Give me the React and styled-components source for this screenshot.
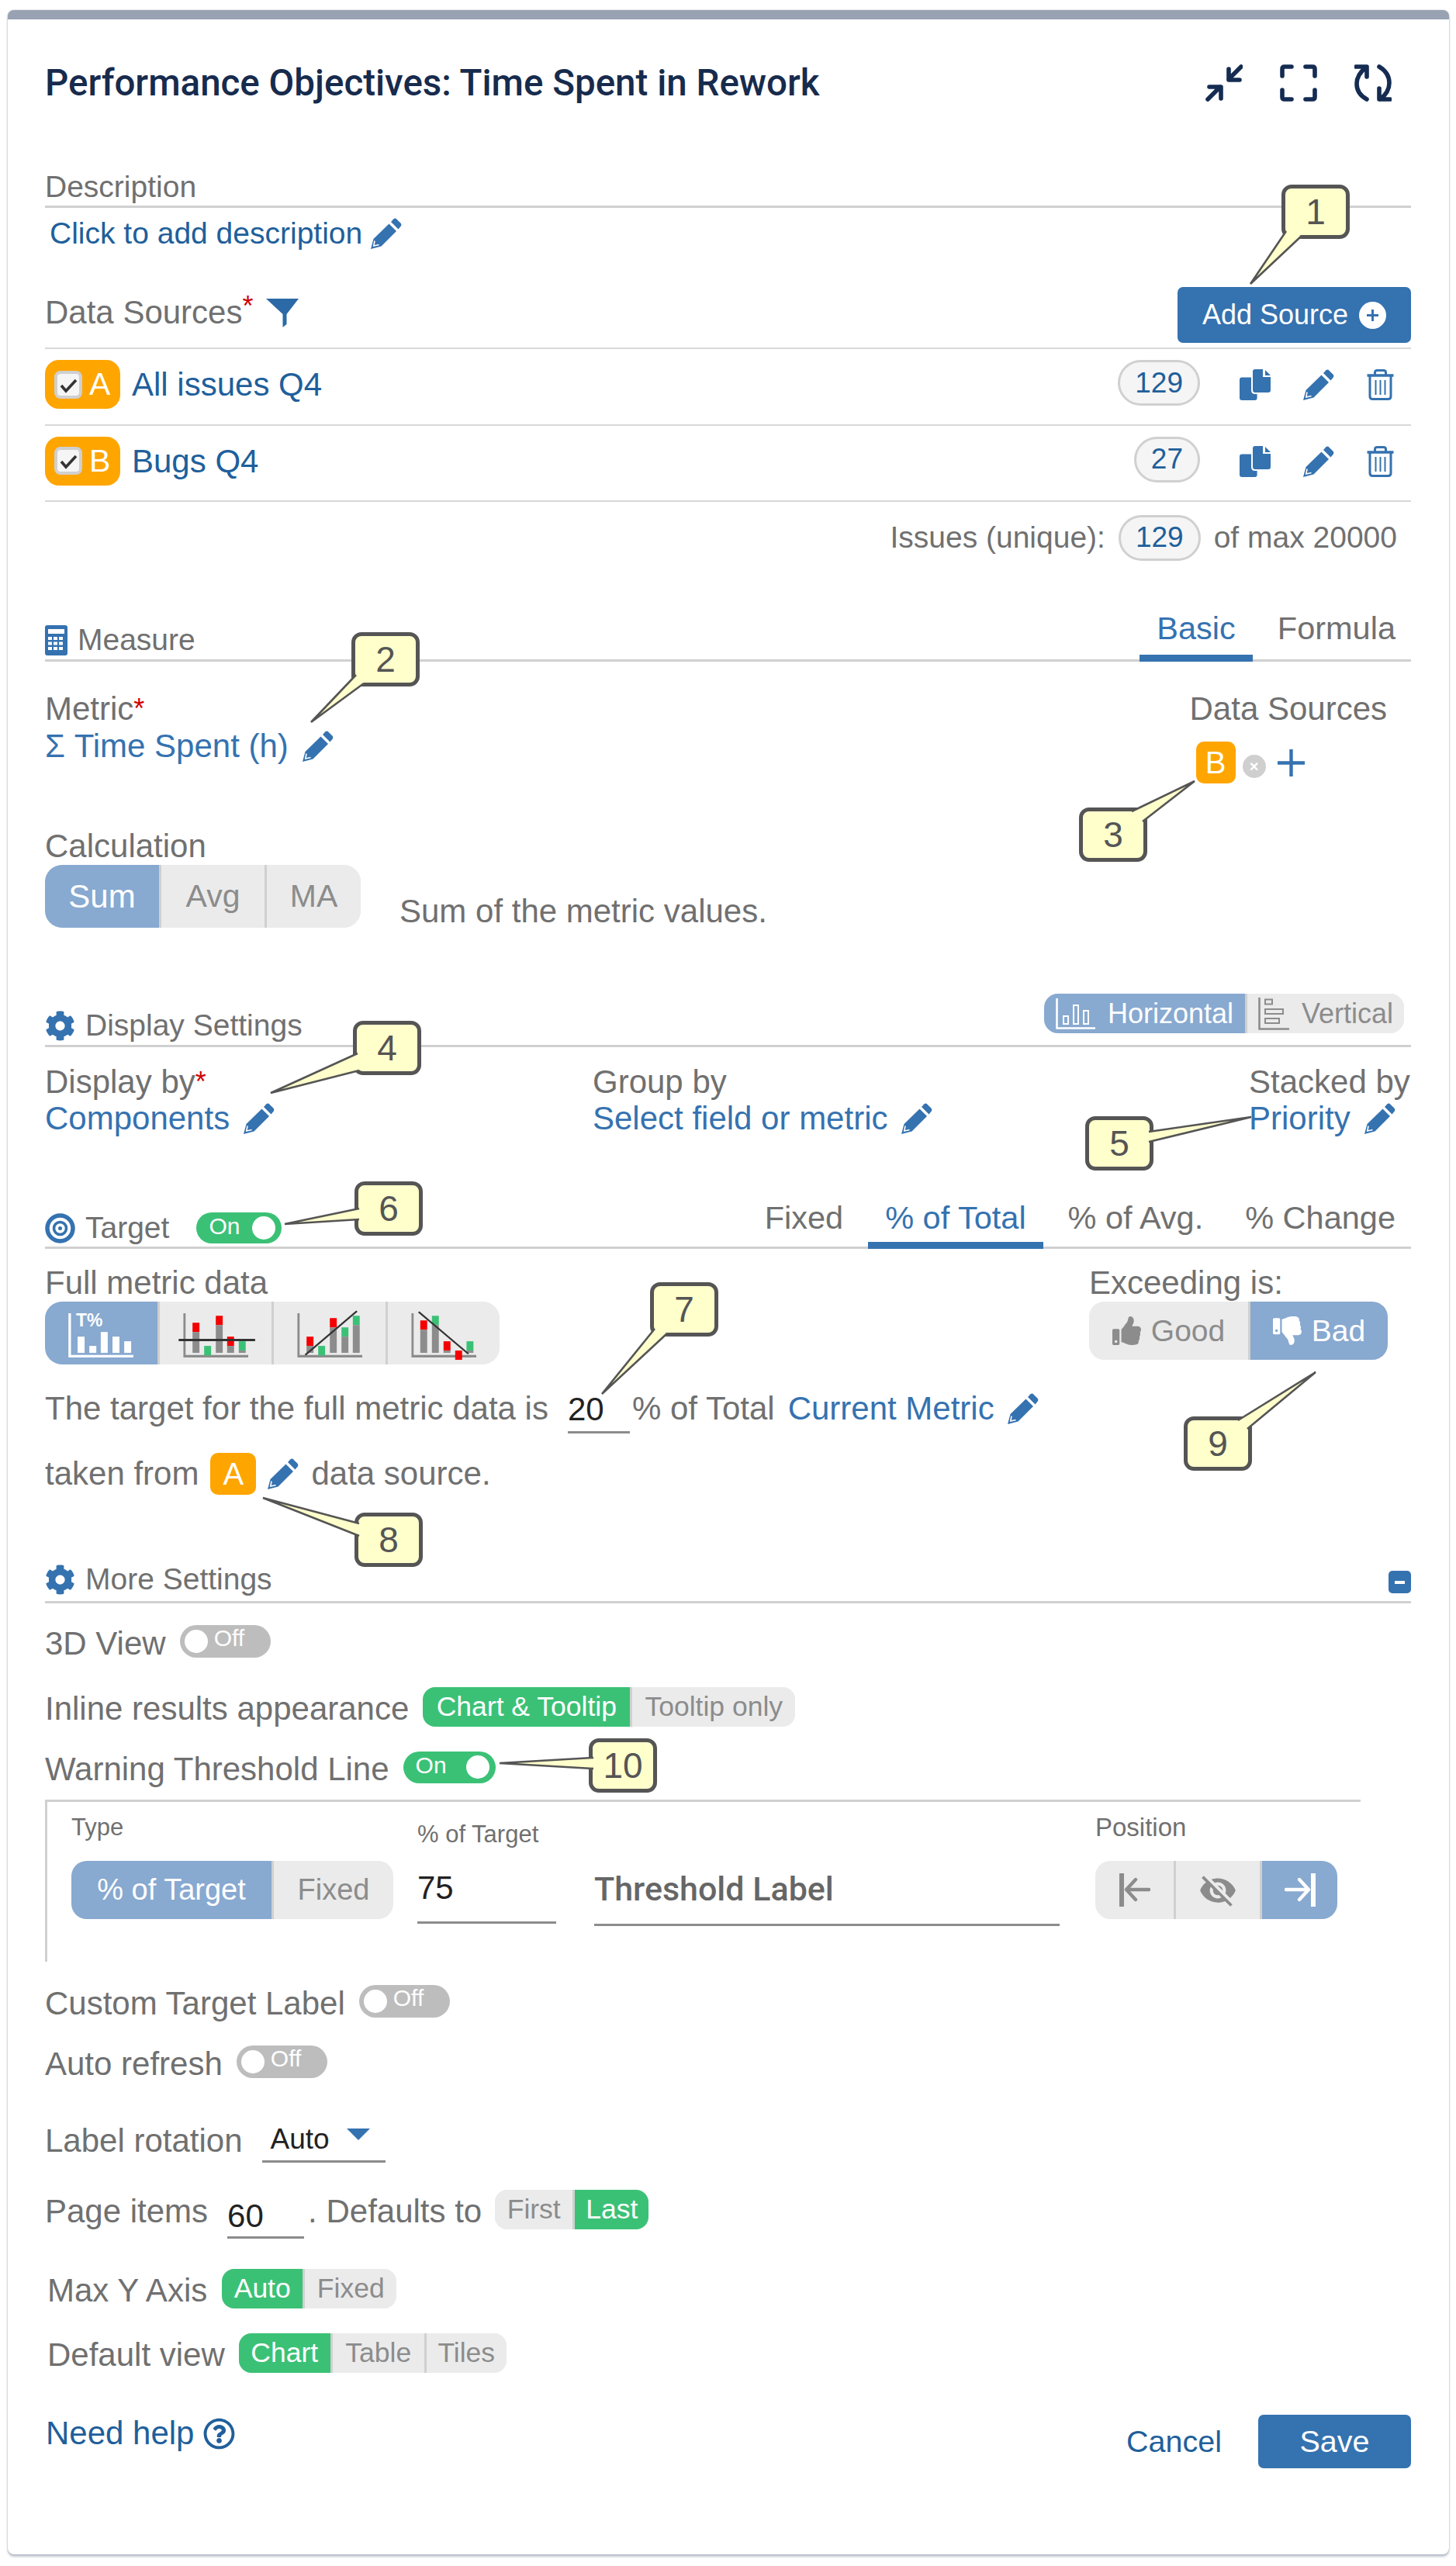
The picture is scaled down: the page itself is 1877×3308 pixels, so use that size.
import React from "react";
import styled, { createGlobalStyle } from "styled-components";
import { FaCog, FaThumbsUp, FaThumbsDown, FaRegQuestionCircle } from "react-icons/fa";
import { MdVisibilityOff } from "react-icons/md";

const BLUE = "#3572b0";
const DARK_LINK = "#205f9b";
const GREY = "#707070";
const SEG_ON = "#88a9d0";
const SEG_OFF = "#ebebeb";
const GREEN = "#3bc176";
const ORANGE = "#ffa500";

const Global = createGlobalStyle`
  html, body { margin: 0; padding: 0; background: #fff; }
  body { font-family: "Liberation Sans", Arial, sans-serif; color: ${GREY}; }
  * { box-sizing: border-box; }
`;

const Page = styled.div`
  position: relative;
  width: 1877px;
  height: 3308px;
  padding: 13px 9px 0 10px;
`;

const Card = styled.div`
  height: 3280px;
  padding: 0 49px 0 48px;
  border-top: 12px solid #98a2b3;
  border-radius: 8px;
  background: #fff;
  box-shadow: 0 0 2px rgba(9, 30, 66, 0.3), 0 3px 3px rgba(9, 30, 66, 0.25);
`;

const Icon = styled.svg`
  flex-shrink: 0;
  display: block;
  width: ${(p) => p.$w}px;
  height: ${(p) => p.$h || p.$w}px;
  color: ${(p) => p.$c || BLUE};
`;

const Pencil = ({ size = 40, c }) => (
  <Icon $w={size} $c={c} viewBox="0 0 40 40">
    <path fill="currentColor" d="M0 40 L3.5 27 L23.5 7.5 L33 17 L13.5 36.5 Z" />
    <path fill="currentColor" d="M26 5 L29.5 1.2 Q31 0 32.5 .8 L38.8 7 Q40 8.8 38.8 10.5 L35.5 14.5 Z" />
    <path fill="none" stroke="#fff" strokeWidth="1.6" d="M5 29.5 L3.8 36 L10.5 34.5" />
  </Icon>
);

const CopyIcon = () => (
  <Icon $w={40} viewBox="0 0 40 40">
    <rect fill="currentColor" x="0" y="10.5" width="22.6" height="29.5" rx="3" />
    <path fill="currentColor" stroke="#fff" strokeWidth="2" d="M20 -1 H31 V9 H41 V27 Q41 31 37 31 H20 Q16 31 16 27 V3 Q16 -1 20 -1 Z" />
    <path fill="currentColor" d="M33 1 L40 8 H33 Z" />
  </Icon>
);

const TrashIcon = () => (
  <Icon $w={35} $h={40} viewBox="0 0 35 40">
    <g fill="none" stroke="currentColor">
      <path strokeWidth="3.4" d="M.5 8 H34.5" />
      <path strokeWidth="3" d="M10.5 7 V4 Q10.5 1.5 13.5 1.5 H21.5 Q24.5 1.5 24.5 4 V7" />
      <path strokeWidth="3" d="M4 9 V35 Q4 38.5 7.5 38.5 H27.5 Q31 38.5 31 35 V9" />
      <path strokeWidth="2" d="M11.5 14 V33 M17.5 14 V33 M23.5 14 V33" />
    </g>
  </Icon>
);

const FunnelIcon = () => (
  <Icon $w={42} $h={37} $c="#2b6aa6" viewBox="0 0 42 37">
    <path fill="currentColor" d="M0 0 H42 L26.5 20 V33 L21.5 37 V20 Z" />
  </Icon>
);

const PlusCircle = () => (
  <Icon $w={35} viewBox="0 0 35 35" $c="#fff">
    <circle cx="17.5" cy="17.5" r="17.5" fill="currentColor" />
    <path d="M17.5 10 V25 M10 17.5 H25" stroke={BLUE} strokeWidth="3" />
  </Icon>
);

const CalculatorIcon = () => (
  <Icon $w={29} $h={39} viewBox="0 0 29 39">
    <rect fill="currentColor" width="29" height="39" rx="3" />
    <rect fill="#fff" x="4" y="5" width="21" height="6" />
    <path stroke="#fff" strokeWidth="4" strokeDasharray="5 2" d="M4 17 H25 M4 23.5 H25 M4 30 H25" />
  </Icon>
);

const TargetIcon = () => (
  <Icon $w={39} viewBox="0 0 39 39">
    <g fill="none" stroke="currentColor">
      <circle cx="19.5" cy="19.5" r="16.5" strokeWidth="5.5" />
      <circle cx="19.5" cy="19.5" r="8" strokeWidth="3.6" />
    </g>
    <circle cx="19.5" cy="19.5" r="2.5" fill="currentColor" />
  </Icon>
);

const CompressIcon = () => (
  <Icon $w={48} $c="#152c52" viewBox="0 0 48 48">
    <path fill="none" stroke="currentColor" strokeWidth="5.6" strokeLinecap="round" strokeLinejoin="round"
      d="M46 3 L30 19 M30 6 V20 H44 M3 45 L19 29 M5 29 H20 V44" />
  </Icon>
);

const ExpandIcon = () => (
  <Icon $w={48} $c="#152c52" viewBox="0 0 48 48">
    <path fill="none" stroke="currentColor" strokeWidth="5.6" strokeLinecap="round"
      d="M3 15 V6 Q3 3 6 3 H15 M33 3 H42 Q45 3 45 6 V15 M3 33 V42 Q3 45 6 45 H15 M33 45 H42 Q45 45 45 42 V33" />
  </Icon>
);

const RefreshIcon = () => (
  <Icon $w={48} $c="#152c52" viewBox="0 0 48 48">
    <path fill="none" stroke="currentColor" strokeWidth="5.6" strokeLinecap="round" strokeLinejoin="round"
      d="M16 45 Q3 38 3 25 Q3 13 15 4 M2 3 H16 V16 M32 3 Q45 11 45 24 Q45 36 33 45 M32 31 V45 H46" />
  </Icon>
);

const HorizontalIcon = () => (
  <Icon $w={51} $h={40} $c="#fff" viewBox="0 0 51 40">
    <g fill="none" stroke="currentColor" strokeWidth="2">
      <path strokeWidth="2.6" d="M1.5 0 V38.5 H51" />
      <rect x="10" y="23" width="6" height="10" />
      <rect x="23" y="9" width="6" height="24" />
      <rect x="36" y="16" width="6" height="17" />
    </g>
  </Icon>
);

const VerticalIcon = () => (
  <Icon $w={40} $h={42} $c="#8c8c8c" viewBox="0 0 40 42">
    <g fill="none" stroke="currentColor" strokeWidth="2">
      <path strokeWidth="2.6" d="M1.5 0 V40.5 H40" />
      <rect x="9" y="2.5" width="9" height="6" />
      <rect x="9" y="15" width="23" height="6" />
      <rect x="9" y="27" width="18" height="6" />
    </g>
  </Icon>
);

const EdgeArrow = ({ right, c }) => (
  <Icon $w={40} $h={43} $c={c} viewBox="0 0 40 43">
    <g fill="none" stroke="currentColor" strokeLinecap="round" strokeLinejoin="round"
      transform={right ? "translate(40 0) scale(-1 1)" : undefined}>
      <path strokeWidth="6" strokeLinecap="butt" d="M3 0 V43" />
      <path strokeWidth="4.4" d="M38 21 H10 M21 8 L9 21 L21 34" />
    </g>
  </Icon>
);

// mini charts of the "full metric data" switch, coordinates in cell units
const CHARTS = [
  { line: [60, 149, 303, 149], width: 9, bars: [
    [104, [["r", 82, 118], ["g", 118, 199]]],
    [141, [["n", 172, 209]]],
    [178, [["r", 55, 91], ["g", 91, 199]]],
    [214, [["r", 136, 172], ["g", 172, 199]]],
    [251, [["n", 154, 190], ["g", 190, 199]]],
  ] },
  { line: [100, 207, 264, 37], width: 6, bars: [
    [104, [["r", 136, 172], ["g", 172, 199]]],
    [141, [["n", 172, 209]]],
    [178, [["r", 64, 100], ["g", 100, 199]]],
    [215, [["n", 100, 136], ["g", 136, 199]]],
    [251, [["n", 55, 91], ["g", 91, 199]]],
  ] },
  { line: [98, 40, 256, 203], width: 6, bars: [
    [103, [["r", 73, 109], ["g", 109, 199]]],
    [140, [["n", 55, 91], ["g", 91, 199]]],
    [177, [["r", 154, 190], ["g", 190, 199]]],
    [214, [["r", 190, 226]]],
    [250, [["n", 154, 190], ["g", 190, 199]]],
  ] },
];
const BAR_COLORS = { r: "#f50000", g: "#8c8c8c", n: GREEN };

const ChartSvg = styled.svg`
  display: block;
  width: 100%;
  height: 100%;
`;

const MiniChart = ({ chart }) => (
  <ChartSvg viewBox="0 0 355 244" preserveAspectRatio="none">
    <path fill="#8c8c8c" d="M75 45 H82 V207 H281 V217 H75 Z" />
    {chart.bars.map(([x, parts]) =>
      parts.map(([k, y1, y2]) => (
        <rect key={x + k + y1} x={x} y={y1} width="22" height={y2 - y1} fill={BAR_COLORS[k]} />
      ))
    )}
    <line x1={chart.line[0]} y1={chart.line[1]} x2={chart.line[2]} y2={chart.line[3]} stroke="#333" strokeWidth={chart.width} />
  </ChartSvg>
);

const TotalChart = () => (
  <ChartSvg viewBox="0 0 355 244" preserveAspectRatio="none">
    <path fill="#fff" d="M74 45 H82 V207 H279 V217 H74 Z" />
    <rect fill="#fff" x="103" y="136" width="22" height="63" />
    <rect fill="#fff" x="140" y="172" width="22" height="27" />
    <rect fill="#fff" x="176" y="118" width="22" height="81" />
    <rect fill="#fff" x="213" y="136" width="22" height="63" />
    <rect fill="#fff" x="250" y="154" width="22" height="45" />
    <text x="98" y="97" fill="#fff" fontFamily="Liberation Sans, sans-serif" fontWeight="700" fontSize="72" textLength="84" lengthAdjust="spacingAndGlyphs">T%</text>
  </ChartSvg>
);

const TitleRow = styled.div`
  height: 164px;
  display: flex;
  align-items: center;
  justify-content: space-between;
  padding-right: 25px;
`;

const Title = styled.h1`
  margin: 0;
  font: 500 47.5px Roboto, "Liberation Sans", sans-serif;
  color: #172b4d;
  white-space: nowrap;
`;

const ToolIcons = styled.div`
  display: flex;
  gap: 48px;
`;

const SectionHead = styled.div`
  display: flex;
  justify-content: space-between;
  height: ${(p) => p.$h + 3}px;
  margin-top: ${(p) => p.$mt}px;
  border-bottom: 3px solid #d0d0d0;
`;

const SectionTitle = styled.div`
  display: flex;
  align-items: center;
  gap: ${(p) => p.$gap || 13}px;
  align-self: flex-end;
  height: ${(p) => p.$h || 50}px;
  font-size: 39px;
  white-space: nowrap;
`;

const Tabs = styled.div`
  display: flex;
  gap: 10px;
`;

const Tab = styled.div`
  height: ${(p) => p.$h}px;
  padding: 0 ${(p) => (p.$last ? 20 : 22)}px ${(p) => p.$pb}px 22px;
  display: flex;
  align-items: center;
  font-size: 41.5px;
  white-space: nowrap;
  color: ${(p) => (p.$on ? BLUE : GREY)};
  border-bottom: 9px solid ${(p) => (p.$on ? BLUE : "transparent")};
`;

const LinkRow = styled.div`
  display: flex;
  align-items: center;
  gap: ${(p) => p.$gap || 18}px;
  height: ${(p) => p.$h || 46}px;
  margin-top: ${(p) => p.$mt || 0}px;
  padding-left: ${(p) => p.$pl || 0}px;
  white-space: nowrap;
`;

const BlueLink = styled.span`
  margin-left: ${(p) => p.$ml || 0}px;
  font-size: ${(p) => p.$size || 42}px;
  color: ${(p) => (p.$dark ? DARK_LINK : BLUE)};
`;

const SourcesHead = styled.div`
  display: flex;
  justify-content: space-between;
  height: 72px;
  margin-top: 49px;
  padding-top: 8px;
`;

const HeadLabel = styled.div`
  display: flex;
  align-items: center;
  gap: 17px;
  height: 50px;
  font-size: 42px;
`;

const Req = styled.sup`
  color: #d00000;
  font-size: 36px;
  line-height: 0;
  vertical-align: 10px;
`;

const AddButton = styled.button`
  display: flex;
  align-items: center;
  justify-content: center;
  gap: 14px;
  width: 301px;
  height: 72px;
  margin-top: -8px;
  border: 0;
  border-radius: 7px;
  background: ${BLUE};
  color: #fff;
  font: 36px "Liberation Sans", Arial, sans-serif;
`;

const SourceList = styled.div`
  margin-top: 6px;
  border-bottom: 2px solid #d8d8d8;
`;

const SourceRow = styled.div`
  display: flex;
  height: 98.5px;
  padding: 14px 0 0;
  border-top: 2px solid #d8d8d8;
`;

const SourceBadge = styled.div`
  display: flex;
  align-items: center;
  width: 97px;
  height: 63px;
  padding-left: 12px;
  gap: 9px;
  border-radius: 18px;
  background: ${ORANGE};
  color: #fff;
  font-size: 41px;
`;

const CheckBox = styled.span`
  display: flex;
  align-items: center;
  justify-content: center;
  width: 36px;
  height: 36px;
  border: 4px solid #d0d0d0;
  border-radius: 8px;
  background: #f5f5f5;
`;

const SourceName = styled.span`
  margin: 4px 0 0 15px;
  line-height: 56px;
  font-size: 42px;
  color: ${DARK_LINK};
`;

const CountPill = styled.span`
  display: flex;
  align-items: center;
  justify-content: center;
  height: 59px;
  padding: 0 19px;
  border: 3px solid #d0d0d0;
  border-radius: 30px;
  background: #f5f5f5;
  color: ${DARK_LINK};
  font-size: 37px;
`;

const RowActions = styled.div`
  display: flex;
  align-items: center;
  gap: 42px;
  height: 40px;
  margin: 12px 22px 0 51px;
`;

const Spacer = styled.div`
  flex: 1;
`;

const TotalsRow = styled.div`
  display: flex;
  align-items: center;
  justify-content: flex-end;
  gap: 17px;
  height: 58px;
  margin-top: 17px;
  padding-right: 18px;
  font-size: 39px;
  white-space: nowrap;
`;

const MetricBlock = styled.div`
  display: flex;
  justify-content: space-between;
  height: 120px;
  margin-top: 37px;
`;

const FieldLabel = styled.div`
  display: flex;
  align-items: center;
  height: 48px;
  margin-top: ${(p) => p.$mt || 0}px;
  font-size: 42px;
  white-space: nowrap;
`;

const SourcePicker = styled.div`
  padding-right: 31px;
`;

const PickerRow = styled.div`
  display: flex;
  align-items: center;
  gap: 9px;
  margin: 18px 0 0 8px;
  height: 54px;
`;

const Letter = styled.span`
  display: inline-flex;
  align-items: center;
  justify-content: center;
  width: ${(p) => p.$w}px;
  height: 54px;
  margin: 0 ${(p) => p.$mx || 0}px;
  border-radius: 10px;
  background: ${ORANGE};
  color: #fff;
  font-size: 40px;
`;

const ClearChip = styled.span`
  display: flex;
  align-items: center;
  justify-content: center;
  width: 30px;
  height: 30px;
  margin: 10px 6px 0 0;
  border-radius: 50%;
  background: #cfcfcf;
  color: #fff;
  font-size: 20px;
  font-weight: 700;
`;

const PlusSign = () => (
  <Icon $w={35} viewBox="0 0 35 35">
    <path d="M17.5 0 V35 M0 17.5 H35" stroke="currentColor" strokeWidth="4.4" />
  </Icon>
);

const Segmented = styled.div`
  display: flex;
  flex-shrink: 0;
  width: fit-content;
  height: ${(p) => p.$h}px;
  margin-right: ${(p) => p.$mr || 0}px;
  border-radius: ${(p) => p.$r || 18}px;
  overflow: hidden;
  background: ${SEG_OFF};
`;

const SegItem = styled.div`
  display: flex;
  align-items: center;
  justify-content: center;
  gap: ${(p) => p.$gap || 0}px;
  width: ${(p) => p.$w}px;
  height: 100%;
  font-size: ${(p) => p.$size || 36}px;
  white-space: nowrap;
  color: ${(p) => (p.$on ? "#fff" : "#8c8c8c")};
  background: ${(p) => (p.$on ? (p.$green ? GREEN : SEG_ON) : SEG_OFF)};
  & + & {
    border-left: 3px solid ${(p) => (p.$on ? "transparent" : "#d0d0d0")};
  }
`;

const CalcRow = styled.div`
  display: flex;
  align-items: flex-end;
  gap: 50px;
`;

const Hint = styled.div`
  height: 42px;
  line-height: 42px;
  font-size: 42px;
`;

const DisplayCols = styled.div`
  display: grid;
  grid-template-columns: 706px 1fr 209px;
  margin-top: 21px;
`;

const Toggle = styled.span`
  position: relative;
  display: inline-flex;
  align-items: center;
  flex-shrink: 0;
  width: ${(p) => p.$w}px;
  height: ${(p) => p.$h}px;
  margin-left: ${(p) => p.$ml || 18}px;
  padding: ${(p) => (p.$on ? "0 0 4px 16px" : "0 0 8px 44px")};
  border-radius: 22px;
  background: ${(p) => (p.$on ? GREEN : "#bdbdbd")};
  color: #fff;
  font-size: 30px;
  &::after {
    content: "";
    position: absolute;
    top: 50%;
    ${(p) => (p.$on ? "right: 8px;" : "left: 6px;")}
    width: 30px;
    height: 30px;
    margin-top: -15px;
    border-radius: 50%;
    background: #fff;
  }
`;

const TargetPanel = styled.div`
  display: flex;
  justify-content: space-between;
  margin-top: 20px;
`;

const ExceedCol = styled.div`
  width: 385px;
  margin-right: 30px;
`;

const SentenceRow = styled.div`
  display: flex;
  align-items: center;
  height: ${(p) => p.$h}px;
  margin-top: ${(p) => p.$mt}px;
  font-size: 42px;
  white-space: nowrap;
`;

const NumberField = styled.input`
  display: block;
  width: ${(p) => p.$w}px;
  height: ${(p) => p.$h}px;
  margin: ${(p) => p.$m || 0};
  padding: ${(p) => p.$pt || 0}px 0 0;
  border: 0;
  border-bottom: 3px solid #8c8c8c;
  border-radius: 0;
  outline: none;
  background: transparent;
  color: #222;
  font: ${(p) => p.$size || 42}px "Liberation Sans", Arial, sans-serif;
`;

const TrailingText = styled.span`
  margin-left: 16px;
`;

const MinusButton = styled.span`
  display: flex;
  align-items: center;
  justify-content: center;
  align-self: flex-end;
  width: 29px;
  height: 29px;
  margin-bottom: 10px;
  border-radius: 5px;
  background: ${BLUE};
  &::before {
    content: "";
    width: 13px;
    height: 4px;
    background: #fff;
  }
`;

const SettingRow = styled.div`
  display: flex;
  align-items: center;
  height: ${(p) => p.$h || 48}px;
  margin-top: ${(p) => p.$mt}px;
  padding-left: ${(p) => p.$pl || 0}px;
  font-size: 42px;
  white-space: nowrap;
`;

const SettingLabel = styled.span`
  padding-top: 5px;
  margin-right: ${(p) => p.$mr || 0}px;
`;

const ThresholdBox = styled.div`
  display: grid;
  grid-template-columns: 446px 228px 646px 1fr;
  width: 1696px;
  height: 209px;
  margin-top: 14px;
  padding-left: 31px;
  border-top: 3px solid #d0d0d0;
  border-left: 3px solid #d0d0d0;
`;

const SmallLabel = styled.div`
  display: flex;
  align-items: center;
  height: 40px;
  margin-top: ${(p) => p.$mt}px;
  font-size: ${(p) => p.$size || 31}px;
  white-space: nowrap;
`;

const BoxControl = styled.div`
  margin-top: ${(p) => p.$mt}px;
`;

const LabelField = styled.div`
  display: flex;
  align-items: center;
  width: 600px;
  height: 94px;
  margin-top: 66px;
  border-bottom: 3px solid #8c8c8c;
  color: #666;
  font: 500 43px Roboto, "Liberation Sans", sans-serif;
`;

const SelectField = styled.div`
  display: flex;
  align-items: center;
  justify-content: space-between;
  width: 159px;
  height: 61px;
  margin-left: 25px;
  padding: 4px 20px 0 11px;
  border-bottom: 3px solid #8c8c8c;
  color: #222;
  font-size: 37px;
`;

const Caret = styled.span`
  width: 0;
  height: 0;
  margin-top: -14px;
  border-left: 15px solid transparent;
  border-right: 15px solid transparent;
  border-top: 15px solid ${BLUE};
`;

const PageItemsRow = styled.div`
  display: flex;
  align-items: flex-start;
  height: 63px;
  margin-top: 35px;
  font-size: 42px;
  white-space: nowrap;
`;

const PageText = styled.span`
  line-height: 56px;
  margin: 0 ${(p) => p.$mr || 0}px 0 ${(p) => p.$ml || 0}px;
`;

const Footer = styled.div`
  display: flex;
  justify-content: space-between;
  margin-top: 54px;
`;

const HelpLink = styled.div`
  display: flex;
  align-items: center;
  gap: 12px;
  height: 48px;
  margin-left: 1px;
  color: ${DARK_LINK};
  font-size: 42px;
`;

const FooterActions = styled.div`
  display: flex;
  align-items: center;
  gap: 47px;
`;

const CancelLink = styled.span`
  color: ${DARK_LINK};
  font-size: 39.5px;
`;

const SaveButton = styled.button`
  width: 197px;
  height: 69px;
  border: 0;
  border-radius: 7px;
  background: ${BLUE};
  color: #fff;
  font: 39.5px "Liberation Sans", Arial, sans-serif;
`;

const CalloutWrap = styled.div`
  position: absolute;
  left: ${(p) => p.$x}px;
  top: ${(p) => p.$y}px;
  width: 88px;
  height: 70px;
`;

const CalloutBox = styled.div`
  display: flex;
  align-items: center;
  justify-content: center;
  width: 100%;
  height: 100%;
  border: 5px solid #555;
  border-radius: 13px;
  background: #ffffcc;
  color: #555;
  font-size: 46px;
`;

const CalloutTail = styled.svg`
  position: absolute;
  left: 0;
  top: 0;
  width: 88px;
  height: 70px;
  overflow: visible;
`;

// one yellow note: a = tail tip, b and c = where the tail leaves the box
const Callout = ({ x, y, n, a, b, c }) => (
  <CalloutWrap $x={x} $y={y}>
    <CalloutBox>{n}</CalloutBox>
    <CalloutTail viewBox="0 0 88 70">
      <polygon points={`${a} ${b} ${c}`} fill="#ffffcc" />
      <polyline points={`${b} ${a} ${c}`} fill="none" stroke="#555" strokeWidth="2.6" strokeLinejoin="miter" />
    </CalloutTail>
  </CalloutWrap>
);

const NOTES = [
  { n: 1, x: 1652, y: 238, a: "-40,128", b: "6,60", c: "26,66" },
  { n: 2, x: 453, y: 815, a: "-52,116", b: "6,55", c: "16,66" },
  { n: 3, x: 1391, y: 1041, a: "149,-34", b: "68,5", c: "82,18" },
  { n: 4, x: 455, y: 1316, a: "-106,93", b: "6,42", c: "8,64" },
  { n: 5, x: 1399, y: 1439, a: "214,1", b: "82,20", c: "82,33" },
  { n: 6, x: 457, y: 1523, a: "-90,55", b: "6,35", c: "6,49" },
  { n: 7, x: 838, y: 1653, a: "-62,144", b: "6,60", c: "22,66" },
  { n: 8, x: 457, y: 1950, a: "-118,-19", b: "6,14", c: "6,30" },
  { n: 9, x: 1526, y: 1826, a: "170,-57", b: "70,5", c: "82,16" },
  { n: 10, x: 759, y: 2241, a: "-115,32", b: "6,25", c: "6,39" },
];

const Check = () => (
  <Icon $w={24} $c="#333" viewBox="0 0 24 24">
    <path d="M3 13 L9 20 L22 6" fill="none" stroke="currentColor" strokeWidth="3.6" />
  </Icon>
);

const SourceLine = ({ letter, name, count }) => (
  <SourceRow>
    <SourceBadge>
      <CheckBox><Check /></CheckBox>
      {letter}
    </SourceBadge>
    <SourceName>{name}</SourceName>
    <Spacer />
    <CountPill>{count}</CountPill>
    <RowActions>
      <CopyIcon />
      <Pencil />
      <TrashIcon />
    </RowActions>
  </SourceRow>
);

export default function App() {
  return (
    <Page>
      <Global />
      <Card>
        <TitleRow>
          <Title>Performance Objectives: Time Spent in Rework</Title>
          <ToolIcons>
            <CompressIcon />
            <ExpandIcon />
            <RefreshIcon />
          </ToolIcons>
        </TitleRow>

        <SectionHead $h={48} $mt={28}>
          <SectionTitle $h={48}>Description</SectionTitle>
        </SectionHead>
        <LinkRow $h={40} $mt={13} $gap={11} $pl={6}>
          <BlueLink $dark $size={39}>Click to add description</BlueLink>
          <Pencil />
        </LinkRow>

        <SourcesHead>
          <HeadLabel>
            <span>Data Sources<Req>*</Req></span>
            <FunnelIcon />
          </HeadLabel>
          <AddButton>Add Source <PlusCircle /></AddButton>
        </SourcesHead>
        <SourceList>
          <SourceLine letter="A" name="All issues Q4" count="129" />
          <SourceLine letter="B" name="Bugs Q4" count="27" />
        </SourceList>
        <TotalsRow>
          <span>Issues (unique):</span>
          <CountPill>129</CountPill>
          <span>of max 20000</span>
        </TotalsRow>

        <SectionHead $h={64} $mt={64}>
          <SectionTitle><CalculatorIcon />Measure</SectionTitle>
          <Tabs>
            <Tab $on $h={67} $pb={10}>Basic</Tab>
            <Tab $last $h={67} $pb={10}>Formula</Tab>
          </Tabs>
        </SectionHead>
        <MetricBlock>
          <div>
            <FieldLabel>Metric<Req>*</Req></FieldLabel>
            <LinkRow $h={48}>
              <BlueLink>Σ Time Spent (h)</BlueLink>
              <Pencil />
            </LinkRow>
          </div>
          <SourcePicker>
            <FieldLabel>Data Sources</FieldLabel>
            <PickerRow>
              <Letter $w={51}>B</Letter>
              <ClearChip>×</ClearChip>
              <PlusSign />
            </PickerRow>
          </SourcePicker>
        </MetricBlock>
        <FieldLabel $mt={57}>Calculation</FieldLabel>
        <CalcRow>
          <Segmented $h={81} $r={22}>
            <SegItem $on $w={147} $size={42}>Sum</SegItem>
            <SegItem $w={136} $size={41}>Avg</SegItem>
            <SegItem $w={124} $size={41}>MA</SegItem>
          </Segmented>
          <Hint>Sum of the metric values.</Hint>
        </CalcRow>

        <SectionHead $h={66} $mt={85}>
          <SectionTitle><FaCog size={39} color={BLUE} />Display Settings</SectionTitle>
          <Segmented $h={51} $r={18} $mr={9}>
            <SegItem $on $w={259} $gap={16}><HorizontalIcon />Horizontal</SegItem>
            <SegItem $w={205} $gap={16}><VerticalIcon />Vertical</SegItem>
          </Segmented>
        </SectionHead>
        <DisplayCols>
          <div>
            <FieldLabel>Display by<Req>*</Req></FieldLabel>
            <LinkRow><BlueLink>Components</BlueLink><Pencil /></LinkRow>
          </div>
          <div>
            <FieldLabel>Group by</FieldLabel>
            <LinkRow><BlueLink>Select field or metric</BlueLink><Pencil /></LinkRow>
          </div>
          <div>
            <FieldLabel>Stacked by</FieldLabel>
            <LinkRow><BlueLink>Priority</BlueLink><Pencil /></LinkRow>
          </div>
        </DisplayCols>

        <SectionHead $h={62} $mt={80}>
          <SectionTitle $h={48}>
            <TargetIcon />Target
            <Toggle $on $w={110} $h={40} $ml={22}>On</Toggle>
          </SectionTitle>
          <Tabs>
            <Tab $h={65} $pb={6}>Fixed</Tab>
            <Tab $on $h={65} $pb={6}>% of Total</Tab>
            <Tab $h={65} $pb={6}>% of Avg.</Tab>
            <Tab $last $h={65} $pb={6}>% Change</Tab>
          </Tabs>
        </SectionHead>
        <TargetPanel>
          <div>
            <FieldLabel>Full metric data</FieldLabel>
            <Segmented $h={81} $r={22}>
              <SegItem $on $w={145}><TotalChart /></SegItem>
              {CHARTS.map((chart, i) => (
                <SegItem key={i} $w={147}><MiniChart chart={chart} /></SegItem>
              ))}
            </Segmented>
          </div>
          <ExceedCol>
            <FieldLabel>Exceeding is:</FieldLabel>
            <Segmented $h={75} $r={20}>
              <SegItem $w={205} $gap={13} $size={39}><FaThumbsUp size={37} />Good</SegItem>
              <SegItem $on $w={180} $gap={13} $size={39}><FaThumbsDown size={37} />Bad</SegItem>
            </Segmented>
          </ExceedCol>
        </TargetPanel>
        <SentenceRow $h={65} $mt={24}>
          The target for the full metric data is
          <NumberField readOnly value="20" $w={80} $h={65} $m="0 3px 0 25px" $pt={6} />
          % of Total
          <BlueLink $ml={17}>Current Metric</BlueLink>
          <LinkRow $pl={17} $gap={0}><Pencil /></LinkRow>
        </SentenceRow>
        <SentenceRow $h={54} $mt={25}>
          taken from
          <Letter $w={59} $mx={15}>A</Letter>
          <Pencil />
          <TrailingText>data source.</TrailingText>
        </SentenceRow>

        <SectionHead $h={56} $mt={81}>
          <SectionTitle $h={56}><FaCog size={39} color={BLUE} />More Settings</SectionTitle>
          <MinusButton />
        </SectionHead>
        <SettingRow $mt={25}>
          <SettingLabel>3D View</SettingLabel>
          <Toggle $w={117} $h={42}>Off</Toggle>
        </SettingRow>
        <SettingRow $h={56} $mt={32}>
          <SettingLabel $mr={18}>Inline results appearance</SettingLabel>
          <Segmented $h={51} $r={16}>
            <SegItem $on $green $w={267} $size={35.5}>Chart &amp; Tooltip</SegItem>
            <SegItem $w={213} $size={35.5}>Tooltip only</SegItem>
          </Segmented>
        </SettingRow>
        <SettingRow $h={56} $mt={22}>
          <SettingLabel>Warning Threshold Line</SettingLabel>
          <Toggle $on $w={119} $h={41}>On</Toggle>
        </SettingRow>
        <ThresholdBox>
          <div>
            <SmallLabel $mt={13}>Type</SmallLabel>
            <BoxControl $mt={23}>
              <Segmented $h={75} $r={20}>
                <SegItem $on $w={258} $size={38}>% of Target</SegItem>
                <SegItem $w={157} $size={38}>Fixed</SegItem>
              </Segmented>
            </BoxControl>
          </div>
          <div>
            <SmallLabel $mt={22}>% of Target</SmallLabel>
            <NumberField readOnly value="75" $w={179} $h={95} $pt={6} />
          </div>
          <LabelField>Threshold Label</LabelField>
          <div>
            <SmallLabel $mt={13} $size={33}>Position</SmallLabel>
            <BoxControl $mt={23}>
              <Segmented $h={75} $r={20}>
                <SegItem $w={101}><EdgeArrow c="#8c8c8c" /></SegItem>
                <SegItem $w={111}><MdVisibilityOff size={50} /></SegItem>
                <SegItem $on $w={100}><EdgeArrow right c="#fff" /></SegItem>
              </Segmented>
            </BoxControl>
          </div>
        </ThresholdBox>
        <SettingRow $mt={27}>
          <SettingLabel>Custom Target Label</SettingLabel>
          <Toggle $w={117} $h={42}>Off</Toggle>
        </SettingRow>
        <SettingRow $mt={30}>
          <SettingLabel>Auto refresh</SettingLabel>
          <Toggle $w={117} $h={42}>Off</Toggle>
        </SettingRow>
        <SettingRow $h={61} $mt={45}>
          <SettingLabel>Label rotation</SettingLabel>
          <SelectField>Auto<Caret /></SelectField>
        </SettingRow>
        <PageItemsRow>
          <PageText $mr={25}>Page items</PageText>
          <NumberField readOnly value="60" $w={99} $h={63} $pt={8} />
          <PageText $ml={5} $mr={17}>. Defaults to</PageText>
          <Segmented $h={51} $r={16}>
            <SegItem $w={100} $size={35.5}>First</SegItem>
            <SegItem $on $green $w={98} $size={35.5}>Last</SegItem>
          </Segmented>
        </PageItemsRow>
        <SettingRow $h={51} $mt={39} $pl={3}>
          <SettingLabel $mr={19}>Max Y Axis</SettingLabel>
          <Segmented $h={51} $r={16}>
            <SegItem $on $green $w={104} $size={35.5}>Auto</SegItem>
            <SegItem $w={121} $size={35.5}>Fixed</SegItem>
          </Segmented>
        </SettingRow>
        <SettingRow $h={51} $mt={32} $pl={3}>
          <SettingLabel $mr={18}>Default view</SettingLabel>
          <Segmented $h={51} $r={16}>
            <SegItem $on $green $w={118} $size={35.5}>Chart</SegItem>
            <SegItem $w={121} $size={35.5}>Table</SegItem>
            <SegItem $w={106} $size={35.5}>Tiles</SegItem>
          </Segmented>
        </SettingRow>
        <Footer>
          <HelpLink>Need help <FaRegQuestionCircle size={41} /></HelpLink>
          <FooterActions>
            <CancelLink>Cancel</CancelLink>
            <SaveButton>Save</SaveButton>
          </FooterActions>
        </Footer>
      </Card>
      {NOTES.map((note) => (
        <Callout key={note.n} {...note} />
      ))}
    </Page>
  );
}
